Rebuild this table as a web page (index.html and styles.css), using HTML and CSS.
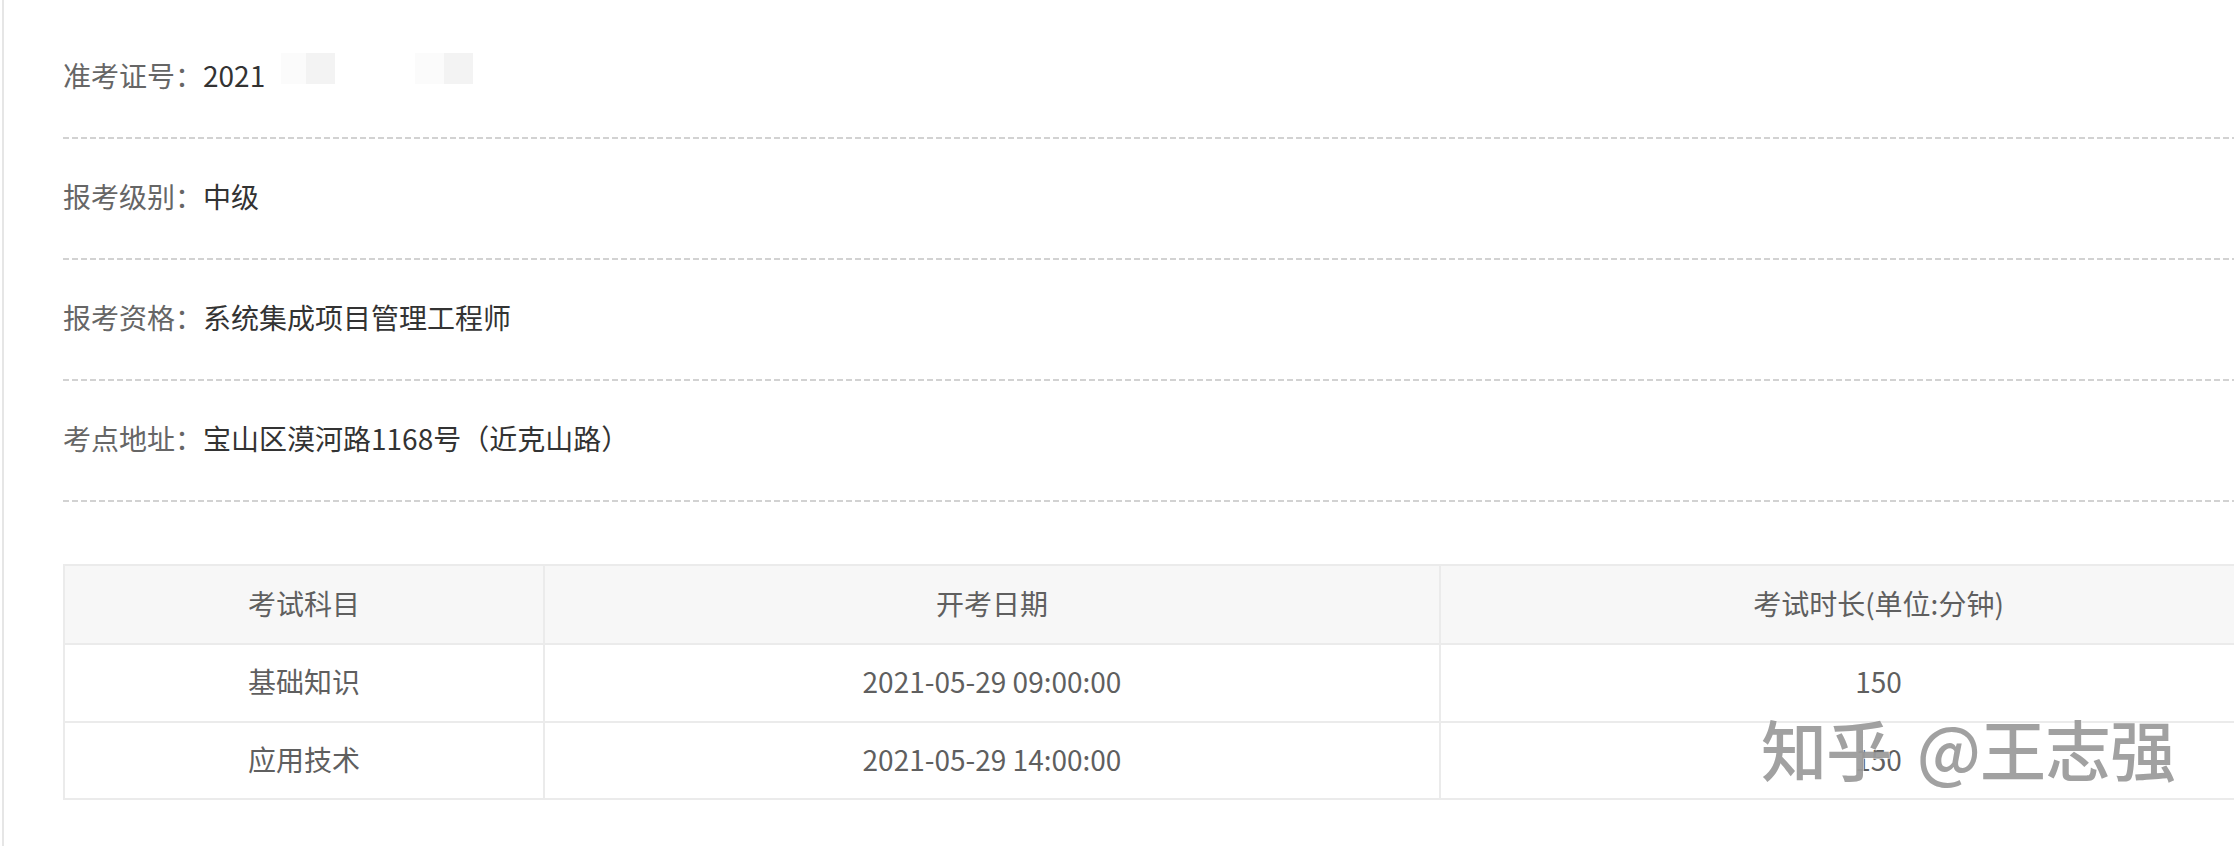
FILE: index.html
```html
<!DOCTYPE html>
<html lang="zh-CN">
<head>
<meta charset="utf-8">
<title>准考证信息</title>
<link rel="stylesheet" href="styles.css">
</head>
<body>
<div class="page">
  <div class="info">
    <div class="row">
      <span class="label">准考证号：</span>
      <span class="value">2021<span class="blur b1"></span><span class="blur b2"></span><span class="blur b3"></span><span class="blur b4"></span></span>
    </div>
    <div class="row">
      <span class="label">报考级别：</span>
      <span class="value">中级</span>
    </div>
    <div class="row">
      <span class="label">报考资格：</span>
      <span class="value">系统集成项目管理工程师</span>
    </div>
    <div class="row">
      <span class="label">考点地址：</span>
      <span class="value">宝山区漠河路1168号（近克山路）</span>
    </div>
  </div>
  <table class="exam">
    <colgroup>
      <col class="c1">
      <col class="c2">
      <col class="c3">
    </colgroup>
    <thead>
      <tr><th>考试科目</th><th>开考日期</th><th>考试时长(单位:分钟)</th></tr>
    </thead>
    <tbody>
      <tr class="r1"><td>基础知识</td><td>2021-05-29 09:00:00</td><td>150</td></tr>
      <tr class="r2"><td>应用技术</td><td>2021-05-29 14:00:00</td><td>150</td></tr>
    </tbody>
  </table>
  <div class="watermark">知乎 @王志强</div>
</div>
</body>
</html>
```

FILE: styles.css
```css
html, body {
  margin: 0;
  padding: 0;
  background: #ffffff;
}

body {
  overflow: hidden;
  font-family: "Noto Sans CJK SC", "Noto Sans", sans-serif;
}

.page {
  position: relative;
  margin-left: 2px;
  border-left: 2px solid #e6e6e6;
  min-height: 846px;
  box-sizing: border-box;
  padding: 18px 0 0 59px;
  width: 2400px;
}

.info {
  width: 2255px;
}

.row {
  display: flex;
  align-items: center;
  height: 121px;
  box-sizing: border-box;
  padding-bottom: 7px;
  font-size: 28px;
  background-image: repeating-linear-gradient(to right, #d2d2d2 0, #d2d2d2 6px, transparent 6px, transparent 9px);
  background-size: 100% 2px;
  background-position: left bottom;
  background-repeat: no-repeat;
}

.label {
  color: #666666;
}

.value {
  color: #333333;
  display: inline-flex;
  align-items: center;
}

.blur {
  display: inline-block;
  height: 31px;
  margin-top: -14px;
}

.b1 { margin-left: 16px; width: 25px; background: #fbfbfb; }
.b2 { width: 29px; background: #f3f3f3; }
.b3 { margin-left: 80px; width: 29px; background: #fbfbfb; }
.b4 { width: 29px; background: #f3f3f3; }

.exam {
  margin-top: 62px;
  width: 2255px;
  table-layout: fixed;
  border-collapse: separate;
  border-spacing: 0;
  border-top: 2px solid #ebebeb;
  border-left: 2px solid #ebebeb;
  font-size: 28px;
  color: #5f5f5f;
}

.c1 { width: 480px; }
.c2 { width: 896px; }
.c3 { width: 877px; }

.exam th,
.exam td {
  box-sizing: border-box;
  border-right: 2px solid #ebebeb;
  border-bottom: 2px solid #ebebeb;
  padding: 0 0 4px;
  text-align: center;
  vertical-align: middle;
  font-weight: normal;
}

.exam th {
  background: #f7f7f7;
  height: 79px;
}

.r1 td {
  height: 78px;
}

.r2 td {
  height: 77px;
}

.watermark {
  position: absolute;
  left: 1757px;
  top: 714px;
  font-size: 66px;
  line-height: 66px;
  letter-spacing: -1px;
  word-spacing: 12px;
  font-weight: 500;
  color: rgba(145, 145, 145, 0.85);
  text-shadow: 1px 1px 0 rgba(255, 255, 255, 0.6);
  white-space: nowrap;
}
```
